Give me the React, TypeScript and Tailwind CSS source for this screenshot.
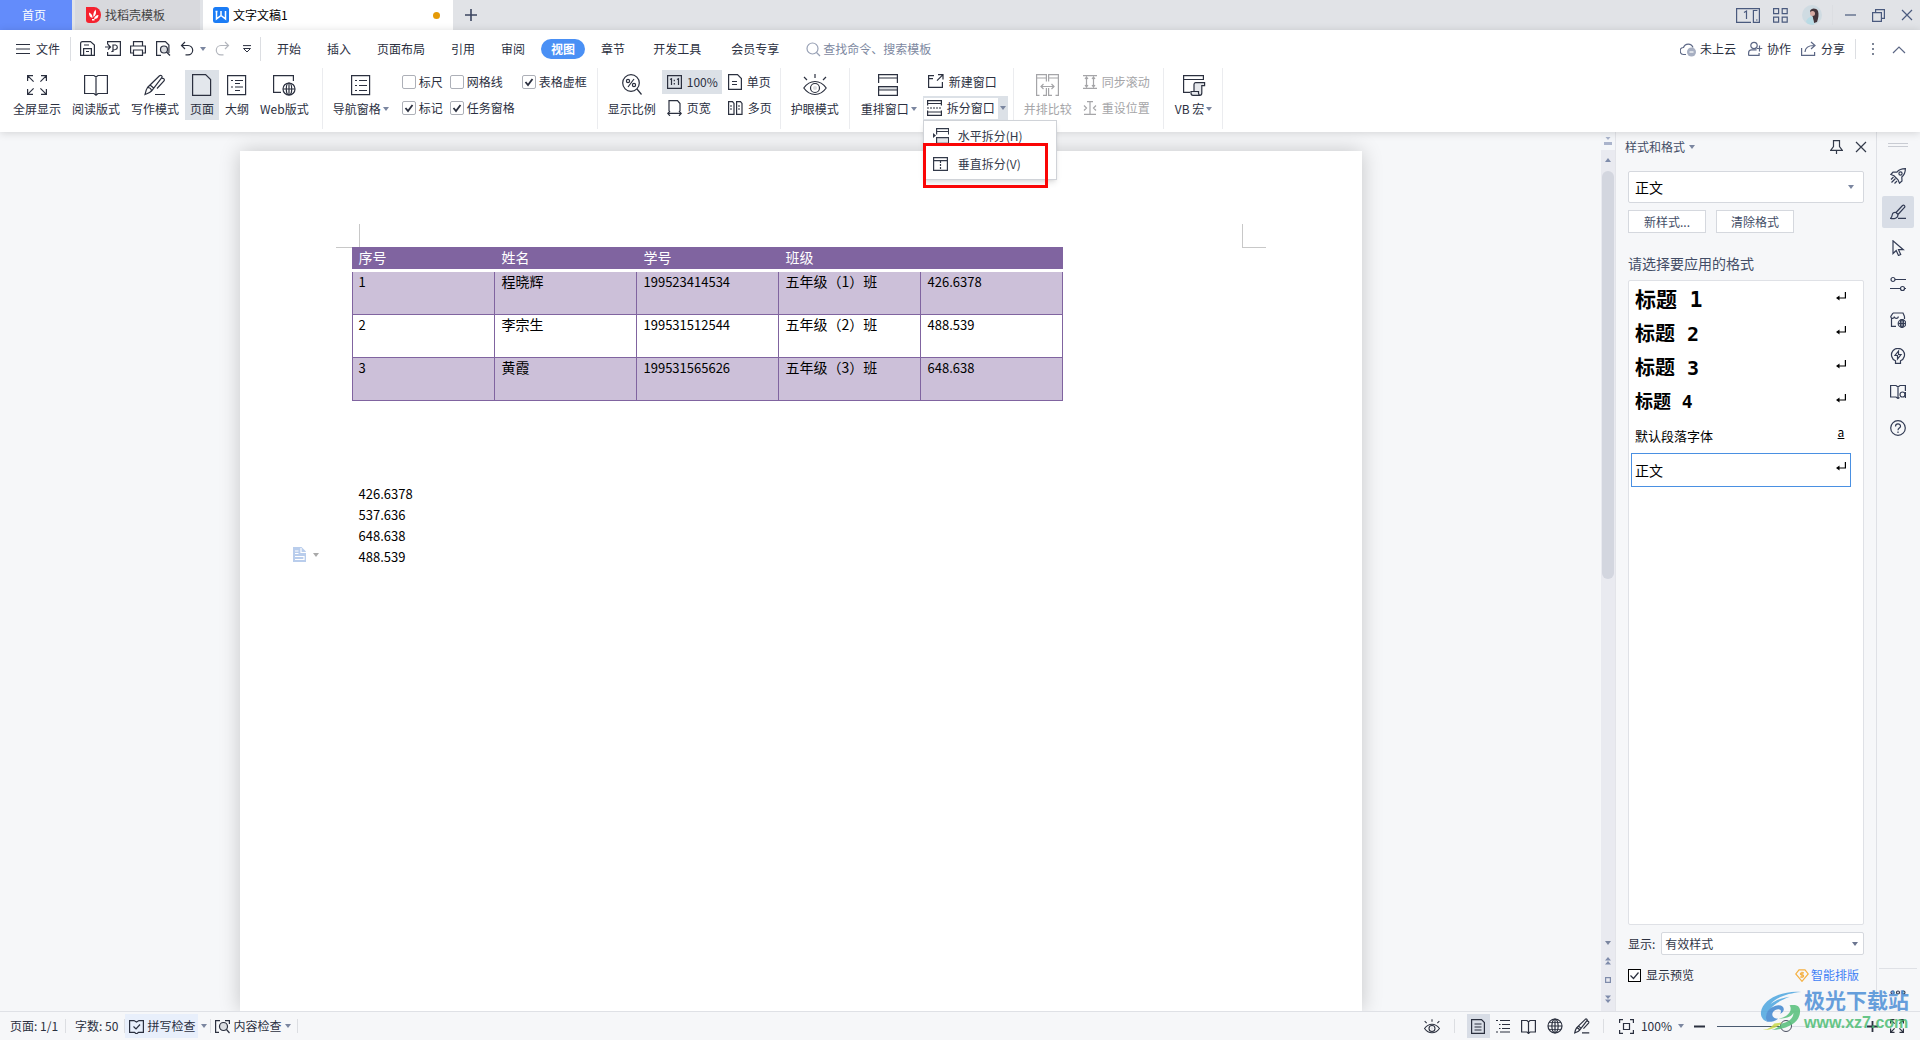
import type { ReactNode } from 'react';
import clsx from 'clsx';

type IconProps = {
  w?: number;
  h?: number;
  className?: string;
  children: ReactNode;
};

const Icon = ({ w = 16, h = 16, className, children }: IconProps) => (
  <svg
    width={w}
    height={h}
    viewBox={`0 0 ${w} ${h}`}
    fill="none"
    stroke="currentColor"
    strokeWidth="1.2"
    className={clsx('shrink-0', className)}
    aria-hidden="true"
  >
    {children}
  </svg>
);

const Caret = ({ className = 'text-[#7b86a0]' }: { className?: string }) => (
  <svg width="6" height="4" viewBox="0 0 6 4" className={clsx('shrink-0', className)} aria-hidden="true">
    <path d="M0 0h6L3 4z" fill="currentColor" />
  </svg>
);

const Divider = ({ className }: { className?: string }) => (
  <span className={clsx('w-px shrink-0 bg-[#dcdee2]', className)} />
);

/* ---------- icons used in more than one place ---------- */

const BookIcon = ({ className }: { className?: string }) => (
  <Icon w={24} h={22} className={className}>
    <path d="M.6 1.500h9.400l2 1.500 2-1.500h9.400v18H14l-2 1.700-2-1.700H.6zM12 3v18" />
  </Icon>
);

const EyeIcon = ({ w = 24, h = 22 }: { w?: number; h?: number }) => (
  <svg width={w} height={h} viewBox="0 0 24 22" fill="none" stroke="currentColor" strokeWidth={w < 20 ? 1.6 : 1.2} className="shrink-0" aria-hidden="true">
    <path d="M.8 14C4 9.500 8 7.500 12 7.500s8 2 11.200 6.500C20 18.500 16 20.500 12 20.500S4 18.500 .8 14z" />
    <circle cx="12" cy="14" r="4.500" />
    <circle cx="12" cy="14" r="2" fill="#dcdee2" stroke="none" />
    <path d="M12 0v4M1 3l3 3M23 3l-3 3" />
  </svg>
);

const PenIcon = ({ w = 22, h = 22 }: { w?: number; h?: number }) => (
  <svg width={w} height={h} viewBox="0 0 22 22" fill="none" stroke="currentColor" strokeWidth={w < 20 ? 1.6 : 1.2} className="shrink-0" aria-hidden="true">
    <path d="M1 20.500c.5-2.500 1-5 2.500-7L15.500 1.800c1.500-1.300 3.300.2 2.300 1.900L7.500 17c-1.500 1.800-4 2.500-6.500 3.500zM3.500 13.500c2 0 3.800 1.500 4 3.500M6 11l4 3.300M18 4.500c2-.5 3 1 2 2.500l-7 7.500M11 20.500h10" />
  </svg>
);

const GlobePath = ({ cx, cy, r }: { cx: number; cy: number; r: number }) => (
  <>
    <circle cx={cx} cy={cy} r={r} />
    <ellipse cx={cx} cy={cy} rx={r * 0.45} ry={r} />
    <path d={`M${cx - r} ${cy}h${r * 2}M${cx} ${cy - r}v${r * 2}`} />
  </>
);

/* ---------- title bar ---------- */

const TitleBar = () => (
  <header className="flex h-[30px] shrink-0 items-stretch bg-[#e1e3e7] text-xs text-[#3b4560]">
    <button className="w-[72px] bg-[#638cfb] pr-1 text-white">首页</button>
    <button className="ml-[3px] flex w-[125px] items-center gap-1 bg-[#d8d9dd] pl-[11px] text-[#444]">
      <Icon w={15} h={16}>
        <path d="M0 0h8a7 8 0 0 1 0 16H3a3 3 0 0 1-3-3z" fill="#f5222f" stroke="none" />
        <path d="M7.500 10c-.5-2.500 0-5 2-7.500 1.200 3 .5 5.500-2 7.500zM6.500 11C4 10.500 2.800 8.500 3 5.500 5.500 6.500 6.800 8.500 6.500 11zM8 12c.5-2.500 2-3.800 4.500-4-.3 3-1.800 4-4.500 4zM6 12h2.500v1.500H6z" fill="#fff" stroke="none" />
      </Icon>
      找稻壳模板
    </button>
    <button className="ml-[3px] flex w-[250px] items-center gap-1 bg-white pl-2.5 text-black">
      <Icon>
        <rect width="16" height="16" rx="2.500" fill="#1b7cf5" stroke="none" />
        <path d="M3.500 4v8L8 8.500l4.500 3.500V4M2.500 4.500h2M8 4v4.500" stroke="#fff" strokeWidth="1.500" />
      </Icon>
      文字文稿1
      <span className="mr-[13px] ml-auto size-[7px] rounded-full bg-[#e59a07]" />
    </button>
    <button className="px-3" aria-label="新建标签">
      <Icon w={12} h={12}>
        <path d="M6 0v12M0 6h12" strokeWidth="1.600" />
      </Icon>
    </button>
    <div className="ml-auto flex items-center pr-[7px] text-[#4a5a7e]">
      <button aria-label="文档列表">
        <Icon w={24} h={15}>
          <path d="M15 14.400H.6V.6h22.800v13.800h-6V2.500h4" />
          <path d="M8 4.500l2.500-1.500v8" />
          <path d="M20 12h1.500" />
        </Icon>
      </button>
      <button className="ml-[13px]" aria-label="应用">
        <Icon w={15} h={15}>
          <path d="M.6.6h5v5h-5zM9.200.6h5v5h-5zM.6 9.200h5v5h-5zM9.200 9.200h5v5h-5z" />
        </Icon>
      </button>
      <button className="ml-3.5" aria-label="账号">
        <Icon w={20} h={20}>
          <circle cx="10" cy="10" r="10" fill="#cfdbe2" stroke="none" />
          <path d="M8 6c1-3 6-3.500 8 0 1 3 .5 7-1 11l-3 1-1-5z" fill="#43343a" stroke="none" />
          <circle cx="10.500" cy="8.500" r="2.500" fill="#d9aca4" stroke="none" />
          <path d="M4 17c1-4 4-5.500 6.500-5.500l1.500 8c-3 .6-6 0-8-2.500z" fill="#b9dbe5" stroke="none" />
        </Icon>
      </button>
      <Divider className="ml-2.5 h-5 bg-[#c6c9d0]" />
      <button className="ml-3" aria-label="最小化">
        <Icon w={11} h={12}>
          <path d="M0 6h11" />
        </Icon>
      </button>
      <button className="ml-4" aria-label="还原">
        <Icon w={13} h={13}>
          <path d="M3.600 3.600V.6h8.800v8.800h-3M.6 3.600h8.800v8.800H.6z" />
        </Icon>
      </button>
      <button className="ml-4" aria-label="关闭">
        <Icon w={12} h={12}>
          <path d="M1 1l10 10M11 1L1 11" />
        </Icon>
      </button>
    </div>
  </header>
);

/* ---------- menu row ---------- */

const MenuRow = () => (
  <nav className="flex h-[38px] items-center pl-4">
    <button className="flex items-center gap-1.5">
      <Icon w={14} h={12}>
        <path d="M0 1.500h14M0 6h14M0 10.500h14" strokeWidth="1" />
      </Icon>
      文件
    </button>
    <Divider className="ml-2.5 h-6" />
    <div className="ml-[9px] flex items-center gap-[9px]">
      <button aria-label="保存">
        <Icon>
          <path d="M.6 2.500c0-1 .6-1.900 1.900-1.900h8L14.400 4v10.400H.6zM3.600 14V7.600h7.800V14M6 10.500h3M4 4h5" />
        </Icon>
      </button>
      <button aria-label="输出为PDF">
        <Icon>
          <path d="M2.600 3.500V.6h12.800v13.800H2.600V11M0 6h5M3 3.500L5.500 6 3 8.500M8 11V4h2.500a2.300 2.300 0 0 1 0 4.500c-1.500 0-3 1-4 2.500" />
        </Icon>
      </button>
      <button aria-label="打印">
        <Icon>
          <path d="M3.500 5V.6h9V5M3.500 12H.6V5h14.800v7h-2.900M3.500 9h9v5.400h-9z" />
        </Icon>
      </button>
      <button aria-label="打印预览">
        <Icon>
          <path d="M6 14.400H1.600V.6h8.800l3.500 3.500v8" />
          <circle cx="9" cy="8.500" r="3.500" fill="#dcdee2" />
          <path d="M11.500 11l3.500 3.500" />
        </Icon>
      </button>
      <button aria-label="撤销">
        <Icon>
          <path d="M5 1L1.500 4.500 5 8M1.500 4.500H8a4.700 4.700 0 0 1 0 9.400H5.500" />
        </Icon>
      </button>
    </div>
    <button className="ml-1" aria-label="撤销列表">
      <Caret />
    </button>
    <button className="ml-2 text-[#b3b6bd]" aria-label="恢复">
      <Icon>
        <path d="M11 1l3.500 3.500L11 8M14.500 4.500H7a4.700 4.700 0 0 0 0 9.400h2.500" />
      </Icon>
    </button>
    <button className="ml-3" aria-label="自定义快速访问">
      <Icon w={10} h={8}>
        <path d="M1 .6h8M1.500 3.500h7L5 7z" strokeWidth="1" />
      </Icon>
    </button>
    <Divider className="ml-2 h-6" />
    <div className="ml-[3px] flex items-center">
      {['开始', '插入', '页面布局', '引用', '审阅'].map((t) => (
        <button key={t} className="px-[13px]">
          {t}
        </button>
      ))}
      <button className="mx-[3px] h-5 rounded-full bg-[#4a90f5] px-2.5 font-bold text-white">视图</button>
      <button className="px-[13px]">章节</button>
      {['开发工具', '会员专享'].map((t) => (
        <button key={t} className="px-[15px]">
          {t}
        </button>
      ))}
    </div>
    <label className="ml-3 flex items-center gap-0.5 text-[#98a1b5]">
      <Icon w={15} h={15}>
        <circle cx="6.500" cy="6.500" r="5.500" />
        <path d="M10.500 10.500l3.500 3.500" />
      </Icon>
      <input className="w-40 outline-none placeholder:text-[#7d889f]" placeholder="查找命令、搜索模板" aria-label="查找命令" />
    </label>
    <div className="ml-auto flex items-center pr-3.5">
      <button className="flex items-center gap-1">
        <Icon>
          <path d="M6 13.500H4a3.500 3.500 0 0 1-.5-7A5 5 0 0 1 13 6.500" stroke="#5c6785" />
          <circle cx="11.500" cy="11" r="4.500" fill="#a7afc2" stroke="none" />
          <path d="M9.500 11h4" stroke="#fff" />
        </Icon>
        未上云
      </button>
      <button className="ml-3 flex items-center gap-1">
        <Icon w={15} className="text-[#5c6785]">
          <circle cx="6" cy="4.500" r="3.200" />
          <path d="M.6 14.400v-2.500c0-2 1.500-3 3-3h5M.6 14.400h10.500v-2.500M11.500 4.500v6M8.700 7.500h5.600" />
        </Icon>
        协作
      </button>
      <button className="ml-2.5 flex items-center gap-1">
        <Icon className="text-[#5c6785]">
          <path d="M.6 7v7.400h13V11M4 11c.3-4 2.500-6.500 9-6.500M10 1l4 3.500-4 3.500" />
        </Icon>
        分享
      </button>
      <Divider className="ml-2.5 h-5" />
      <button className="ml-4 text-[#7d8596]" aria-label="更多">
        <Icon w={2} h={12}>
          <path d="M1 0v2M1 5v2M1 10v2" strokeWidth="2" />
        </Icon>
      </button>
      <button className="ml-[18px] text-[#5c6785]" aria-label="收起功能区">
        <Icon w={14} h={9}>
          <path d="M1 8l6-6 6 6" />
        </Icon>
      </button>
    </div>
  </nav>
);

/* ---------- ribbon ---------- */

type BigButtonProps = { icon: ReactNode; label: string; caret?: boolean; active?: boolean; disabled?: boolean };

const BigButton = ({ icon, label, caret, active, disabled }: BigButtonProps) => (
  <button
    disabled={disabled}
    className={clsx(
      'flex h-[50px] shrink-0 flex-col items-center px-[5px] pt-[3px]',
      active && 'bg-[#dce1e7]',
      disabled && 'text-[#a5a5a8]',
    )}
  >
    <span className="flex h-[23px] items-center">{icon}</span>
    <span className="mt-1 flex items-center gap-0.5 leading-[18px]">
      {label}
      {caret && <Caret />}
    </span>
  </button>
);

type SmallButtonProps = { icon: ReactNode; label: string; active?: boolean; disabled?: boolean };

const SmallButton = ({ icon, label, active, disabled }: SmallButtonProps) => (
  <button
    disabled={disabled}
    className={clsx(
      'flex h-6 items-center gap-[5px] px-[5px] whitespace-nowrap',
      active && 'bg-[#dce1e7]',
      disabled && 'text-[#a5a5a8]',
    )}
  >
    {icon}
    {label}
  </button>
);

const CheckOption = ({ label, checked }: { label: string; checked?: boolean }) => (
  <label className="flex h-6 items-center gap-[3px] whitespace-nowrap">
    <span className="relative size-3.5">
      <input
        type="checkbox"
        defaultChecked={checked}
        className="peer block size-3.5 appearance-none rounded-xs border border-[#adb0b8] bg-white"
      />
      <Icon w={14} h={14} className="pointer-events-none invisible absolute top-0 left-0 peer-checked:visible">
        <path d="M3.500 7l2.500 3 4.500-6" strokeWidth="1.800" />
      </Icon>
    </span>
    {label}
  </label>
);

const Group = ({ children, className }: { children: ReactNode; className?: string }) => (
  <div className={clsx('flex h-[61px] shrink-0 border-r border-[#ebecef] pt-0.5', className)}>{children}</div>
);

const SplitMenu = () => (
  <div className="absolute top-6 left-0 z-20 w-[134px] border border-[#d0d3d8] bg-white py-px shadow-md">
    <button className="flex h-7 w-full items-center gap-[9px] pl-[9px] text-[#333a4a]">
      <Icon>
        <path d="M3.600 6.500V.6h12v5.900M3.600 3.500h12" />
        <path d="M3.600 15.400V9.600h12v5.800z" fill="#e3e5e9" />
        <path d="M0 5l3 2.500L0 10z" fill="currentColor" stroke="none" />
      </Icon>
      水平拆分(H)
    </button>
    <button className="flex h-7 w-full items-center gap-[9px] pl-[9px] text-[#333a4a]">
      <Icon>
        <path d="M.6 1.600h13.800v12.800H.6zM.6 4.600h13.800" />
        <path d="M7.500 5v9" strokeDasharray="2 1" />
      </Icon>
      垂直拆分(V)
    </button>
    <span className="pointer-events-none absolute top-[22px] -left-px h-[45px] w-[125px] border-3 border-[#fa0505]" />
  </div>
);

const Ribbon = () => (
  <div className="flex h-16">
    <Group className="gap-px pr-2 pl-2">
      <BigButton
        label="全屏显示"
        icon={
          <Icon w={20} h={20}>
            <path d="M.6 6V.6H6M.6.6l6 6M14 .6h5.400V6M19.400.6l-6 6M.6 14v5.400H6M.6 19.400l6-6M14 19.400h5.400V14M19.400 19.400l-6-6" />
          </Icon>
        }
      />
      <BigButton label="阅读版式" icon={<BookIcon />} />
      <BigButton label="写作模式" icon={<PenIcon />} />
      <BigButton
        label="页面"
        active
        icon={
          <Icon w={20} h={22}>
            <path d="M.6.6h13l5 5v15.800H.6z" fill="#e3e7ec" />
          </Icon>
        }
      />
      <BigButton
        label="大纲"
        icon={
          <Icon w={20} h={22}>
            <path d="M.6 1.600h18v19H.6zM8 6.500h8M8 9.500h5M8 13h8M8 16.500h5M4 6.500h2M4 13h2" />
          </Icon>
        }
      />
      <BigButton
        label="Web版式"
        icon={
          <Icon w={24} h={22}>
            <path d="M9 18.400H1.600V1.600h19.800V7" />
            <GlobePath cx={17} cy={15} r={6} />
          </Icon>
        }
      />
    </Group>

    <Group className="pr-2.5 pl-[5px]">
      <BigButton
        label="导航窗格"
        caret
        icon={
          <Icon w={20} h={22}>
            <path d="M.6 1.600h18v19H.6zM8 6.500h8M8 11.500h8M8 16.500h8M4 6.500h2M4 11.500h2M4 16.500h2" />
          </Icon>
        }
      />
      <div className="ml-2 grid grid-cols-[48px_72px_auto] content-start gap-y-0.5">
        <CheckOption label="标尺" />
        <CheckOption label="网格线" />
        <CheckOption label="表格虚框" checked />
        <CheckOption label="标记" checked />
        <CheckOption label="任务窗格" checked />
      </div>
    </Group>

    <Group className="pr-[3px] pl-[5px]">
      <BigButton
        label="显示比例"
        icon={
          <Icon w={20} h={22}>
            <circle cx="9" cy="9" r="8.300" />
            <path d="M15 15l4.500 5.500M12 5l-6 8" />
            <circle cx="6" cy="7" r="1.600" />
            <circle cx="12" cy="11" r="1.600" />
          </Icon>
        }
      />
      <div className="ml-px grid grid-cols-[60px_auto] content-start gap-x-px gap-y-0.5">
        <SmallButton
          label="100%"
          active
          icon={
            <Icon w={15} h={14}>
              <path d="M.6.6h13.800v12.800H.6zM3 4.500l1.500-.8V10M10 4.500l1.500-.8V10M7.300 4.800v1.400M7.300 8v1.400" />
            </Icon>
          }
        />
        <SmallButton
          label="单页"
          icon={
            <Icon w={14} h={16}>
              <path d="M.6.6h8.900l3.900 3.900v10.900H.6zM4 7.500h5M4 10.500h5" />
            </Icon>
          }
        />
        <SmallButton
          label="页宽"
          icon={
            <Icon w={15} h={16}>
              <path d="M2 11V.6h8.500L13 3.500V11M.5 13.400h14M3 11L.8 13.400 3 15.800M12 11l2.200 2.400L12 15.800" />
            </Icon>
          }
        />
        <SmallButton
          label="多页"
          icon={
            <Icon w={15} h={14}>
              <path d="M.6.6h3.900L6 2.500v10.900H.6zM8.600.6h3.900L14 2.500v10.900H8.600zM2 5h2M2 8h2M10 5h2M10 8h2" />
            </Icon>
          }
        />
      </div>
    </Group>

    <Group className="px-[5px]">
      <BigButton label="护眼模式" icon={<EyeIcon />} />
    </Group>

    <Group className="pr-[5px] pl-1.5">
      <BigButton
        label="重排窗口"
        caret
        icon={
          <Icon w={21} h={22}>
            <path d="M.6 9V.6h18.800V9M.6 4h18.800" />
            <path d="M1 13h18v3H1z" fill="#dcdee2" stroke="none" />
            <path d="M.6 12.600h18.800v8.800H.6zM.6 16h18.800" />
          </Icon>
        }
      />
      <div className="ml-px flex flex-col gap-0.5">
        <SmallButton
          label="新建窗口"
          icon={
            <Icon>
              <path d="M6 1.600H.6v11.800h13.800V8M10 .6h5v5M15 .6l-6 6M.6 4.600H5" />
            </Icon>
          }
        />
        <div className="relative flex h-6 w-[85px] items-center bg-[#dce1e7] p-px">
          <button className="flex h-[21px] items-center gap-1 bg-white px-[3px]">
            <Icon>
              <path d="M.6 5.500V.6h13.800v4.900M.6 3.500h13.800M.6 10.500v4.900h13.800v-4.900M.6 12h13.800" />
              <path d="M0 8h15" strokeDasharray="2 1" />
            </Icon>
            拆分窗口
          </button>
          <button className="ml-0.5" aria-label="拆分窗口选项">
            <Caret />
          </button>
          <SplitMenu />
        </div>
      </div>
    </Group>

    <Group className="pr-2 pl-[5px]">
      <BigButton
        label="并排比较"
        disabled
        icon={
          <Icon w={23} h={22}>
            <path d="M3.500 21.400H.6V.6h9.800v7M10.400 14v7.400H7M19.500 21.400h2.900V.6h-9.800v7M12.600 14v7.400H16M.6 4h9.800M12.600 4h9.800M5 12.500h13M7.500 10L5 12.500 7.500 15M15.500 10l2.500 2.500-2.500 2.500" />
          </Icon>
        }
      />
      <div className="ml-px flex flex-col gap-0.5">
        <SmallButton
          label="同步滚动"
          disabled
          icon={
            <Icon w={14} h={14}>
              <path d="M0 .6h14M0 13.400h14M3.500 2v10M10.500 2v10M2 4l1.500-2L5 4M2 10l1.500 2L5 10M9 4l1.500-2L12 4M9 10l1.500 2 1.500-2" />
            </Icon>
          }
        />
        <SmallButton
          label="重设位置"
          disabled
          icon={
            <Icon w={14} h={14}>
              <path d="M4 .6h6M1 13.400h12M7 1v12M1 4.500l2.500 2.500L1 9.500M13 4.500L10.500 7 13 9.500" />
            </Icon>
          }
        />
      </div>
    </Group>

    <Group className="pr-[5px] pl-1.5">
      <BigButton
        label="VB 宏"
        caret
        icon={
          <Icon w={24} h={22}>
            <path d="M8 18.400H1.600V1.600h19.800V6M1.600 5.500h19.800" />
            <path d="M12 17V10.500c0-1 .6-1.900 1.600-1.900h9v3h-2.800V19c0 1.500-1 2.400-2 2.400H11c-1.500 0-2-1.400-2-2.400v-1.500h7.500V19c0 1.200.5 2 1.500 2.400" fill="#e6e8ec" />
          </Icon>
        }
      />
    </Group>
  </div>
);

/* ---------- document ---------- */

const ROWS = [
  ['1', '程晓辉', '199523414534', '五年级（1）班', '426.6378'],
  ['2', '李宗生', '199531512544', '五年级（2）班', '488.539'],
  ['3', '黄霞', '199531565626', '五年级（3）班', '648.638'],
];

const LINES = ['426.6378', '537.636', '648.638', '488.539'];

const isNumeric = (s: string) => /^[\d.]+$/.test(s);

const Document = () => (
  <main className="flex min-w-0 flex-1 justify-center overflow-hidden bg-[#f6f7f9] pt-[19px]">
    <article className="w-[1122px] shrink-0 bg-white px-24 pt-[73px] text-sm leading-[21px] text-black shadow-[0_0_20px_rgba(0,0,0,0.2)]">
      <div className="flex justify-between">
        <span className="size-6 border-r border-b border-[#c8c8c8]" />
        <span className="size-6 border-b border-l border-[#c8c8c8]" />
      </div>
      <table className="relative -mt-px ml-4 w-[711px] table-fixed border-separate border-spacing-0 text-left leading-[19px]">
        <colgroup>
          <col className="w-[143px]" />
          <col span={4} className="w-[142px]" />
        </colgroup>
        <thead>
          <tr>
            {['序号', '姓名', '学号', '班级', ''].map((h, i) => (
              <th
                key={i}
                className="h-[25px] border-b-3 border-b-white bg-[#8064a0] pt-px pl-[7px] align-top font-normal text-white"
              >
                {h}
              </th>
            ))}
          </tr>
        </thead>
        <tbody>
          {ROWS.map((row) => (
            <tr key={row[0]} className="odd:bg-[#ccc0d9]">
              {row.map((cell) => (
                <td
                  key={cell}
                  className={clsx(
                    'h-[43px] border-r border-b border-[#8064a0] pl-[7px] align-top first:border-l first:pl-1.5',
                    isNumeric(cell) && 'text-[13px]',
                  )}
                >
                  {cell}
                </td>
              ))}
            </tr>
          ))}
        </tbody>
      </table>
      <div className="relative mt-[82px] ml-[23px] text-[13px]">
        {LINES.map((l) => (
          <p key={l}>{l}</p>
        ))}
        <button className="absolute bottom-1 -left-[66px] flex items-center gap-1.5" aria-label="粘贴选项">
          <Icon w={14} h={16}>
            <path d="M0 0h8.500L13 4.500V15H0z" fill="#b9cdec" stroke="none" />
            <path d="M2 4h3.500M2 6.500h3.500M2 9.500h9v3H2M8 1v4.500h5" stroke="#fff" />
          </Icon>
          <Caret className="text-[#a9a9a9]" />
        </button>
      </div>
    </article>
  </main>
);

const ScrollBar = () => (
  <div className="flex w-[15px] shrink-0 flex-col items-center border-r border-[#e3e4e9] bg-[#e9eaf0] text-[#7f8cab]">
    <button className="flex h-[18px] w-full items-center justify-center bg-[#f4f6f9] text-[#aab4cc]" aria-label="标尺开关">
      <Icon w={8} h={8}>
        <path d="M1.500 0h5L4 3zM0 5h8v3H0z" fill="currentColor" stroke="none" />
      </Icon>
    </button>
    <button className="flex h-5 items-center" aria-label="向上滚动">
      <Caret className="rotate-180" />
    </button>
    <div className="mt-px w-full flex-1">
      <div className="mx-auto h-[53%] w-3 rounded-full bg-[#d3d6df]" />
    </div>
    <div className="flex flex-col items-center gap-3 pb-2">
      <button aria-label="向下滚动">
        <Caret />
      </button>
      <button aria-label="上一页">
        <Icon w={6} h={8}>
          <path d="M3 0l3 3.500H0zM3 4l3 3.500H0z" fill="currentColor" stroke="none" />
        </Icon>
      </button>
      <button aria-label="选择浏览对象">
        <Icon w={6} h={6}>
          <path d="M.6.6h4.800v4.800H.6z" />
        </Icon>
      </button>
      <button aria-label="下一页">
        <Icon w={6} h={8}>
          <path d="M0 .5h6L3 4zM0 4.500h6L3 8z" fill="currentColor" stroke="none" />
        </Icon>
      </button>
    </div>
  </div>
);

/* ---------- style panel ---------- */

const HEADING = "font-['DejaVu_Sans_Mono','Noto_Sans_CJK_SC',monospace] font-bold";

const STYLES = [
  { name: '标题 1', className: clsx(HEADING, 'text-[21px]') },
  { name: '标题 2', className: clsx(HEADING, 'text-xl') },
  { name: '标题 3', className: clsx(HEADING, 'text-xl') },
  { name: '标题 4', className: clsx(HEADING, 'text-lg') },
  { name: '默认段落字体', className: 'text-[13px]', char: true },
  { name: '正文', className: 'text-sm', selected: true },
];

const ReturnMark = () => (
  <Icon w={10} h={10} className="mt-1">
    <path d="M9.400 0v6H2" />
    <path d="M0 6l3.500-2.500v5z" fill="currentColor" stroke="none" />
  </Icon>
);

const StylePanel = () => (
  <aside className="flex w-[261px] shrink-0 flex-col border-r border-[#dfe1e6] bg-[#f6f7f9] pr-3 pl-3 text-xs text-[#434d66]">
    <div className="-ml-[3px] flex h-[30px] items-center">
      <button className="flex items-center gap-1">
        样式和格式 <Caret />
      </button>
      <button className="ml-auto text-[#333a4a]" aria-label="固定">
        <Icon w={13} h={14}>
          <path d="M3.500.6h6v6l2.900 3.800H.6l2.900-3.800zM6.500 10.400V14" />
        </Icon>
      </button>
      <button className="mr-[-3px] ml-3 text-[#333a4a]" aria-label="关闭面板">
        <Icon w={12} h={12}>
          <path d="M1 1l10 10M11 1L1 11" />
        </Icon>
      </button>
    </div>
    <div className="relative mt-[9px]">
      <select
        aria-label="当前样式"
        className="h-8 w-full appearance-none rounded-xs border border-[#d5d8de] bg-white pl-1.5 text-sm text-black"
      >
        <option>正文</option>
      </select>
      <Caret className="pointer-events-none absolute top-3.5 right-2.5 text-[#7b86a0]" />
    </div>
    <div className="mt-[7px] flex gap-2.5">
      <button className="h-[23px] w-[78px] border border-[#d5d8de] bg-white">新样式...</button>
      <button className="h-[23px] w-[78px] border border-[#d5d8de] bg-white">清除格式</button>
    </div>
    <h2 className="mt-5 text-sm leading-5">请选择要应用的格式</h2>
    <ul className="mt-[7px] flex-1 rounded-xs border border-[#dfe1e6] bg-white py-0.5 pr-3 pl-0.5 text-black">
      {STYLES.map((s) => (
        <li key={s.name}>
          <button
            className={clsx(
              'flex h-[34px] w-full items-center justify-between border px-[3px] text-left',
              s.selected ? 'border-[#4a90e2]' : 'border-transparent',
            )}
          >
            <span className={s.className}>{s.name}</span>
            <span className="flex h-6 w-3 items-start justify-center">
              {s.char ? <span className="text-xs leading-4 underline">a</span> : <ReturnMark />}
            </span>
          </button>
        </li>
      ))}
    </ul>
    <label className="mt-[7px] flex items-center gap-1.5 text-[#2b303f]">
      显示:
      <span className="relative flex-1">
        <select className="block h-[23px] w-full appearance-none rounded-xs border border-[#d5d8de] bg-white pl-[3px] text-[#333a4a]">
          <option>有效样式</option>
        </select>
        <Caret className="pointer-events-none absolute top-2.5 right-1.5 text-[#6b7590]" />
      </span>
    </label>
    <div className="mt-2.5 mb-[26px] flex h-5 items-center justify-between pr-[5px]">
      <label className="flex items-center gap-[5px] text-[#2b303f]">
        <span className="relative size-[13px]">
          <input type="checkbox" defaultChecked className="peer block size-[13px] appearance-none border border-black bg-white" />
          <Icon w={13} h={13} className="pointer-events-none invisible absolute top-0 left-0 peer-checked:visible">
            <path d="M2.500 6.500l3 3 5-6" />
          </Icon>
        </span>
        显示预览
      </label>
      <a href="#layout" className="flex items-center gap-0.5 text-[#3f7ff5]">
        <Icon w={14} h={13} className="text-[#f5b041]">
          <path d="M4 .8h6L13.200 5 7 12.300.8 5z" />
          <path d="M9 3.800H6.500c-1.500 0-1.500 2 0 2h1c1.500 0 1.500 2.200 0 2.200H5M7 2.800v6.200" />
        </Icon>
        智能排版
      </a>
    </div>
  </aside>
);

const SIDE_TOOLS: { label: string; icon: ReactNode }[] = [
  {
    label: '推荐',
    icon: (
      <>
        <path d="M15.400.6c-4 0-6.500 1-8.500 3.500L3 4 .8 6.500 4 7.800l4 4 1.500 3.400L12 13l-.2-4c2.500-2 3.600-4.500 3.600-8.400z" />
        <circle cx="10.500" cy="5.500" r="1.600" />
        <path d="M1 11.500l2.500-2.500M1.500 14.500l4-4M4.500 15.500l2.500-2.500" />
      </>
    ),
  },
  {
    label: '样式和格式',
    icon: <path d="M6 8.500L12.500 1.500c1.500-1 3 .5 2 2L8 10.500M6 8.500c-2-.5-3.500.5-3.800 2.500-.2 1.500-.7 2.500-1.700 3.500 3.500.5 7.500 0 7.500-4zM6 8.500l2 2M8 14.400h8" />,
  },
  {
    label: '选择',
    icon: <path d="M3 .8v12.700l3.200-3 2.300 5 2.200-1-2.200-4.800h4.800z" />,
  },
  {
    label: '属性',
    icon: (
      <>
        <circle cx="3" cy="3.500" r="2" />
        <circle cx="12.500" cy="12.500" r="2" />
        <path d="M5 3.500h11M0 12.500h10.500M14.500 12.500H16" />
      </>
    ),
  },
  {
    label: '素材',
    icon: (
      <>
        <path d="M1.500 6v8.400H6M3 1h10l1.500 3.500M3 1L.8 4.500c0 2.500 3.500 2.500 3.500 0 0 2.500 4 2.500 4 0M14.500 4.500V7" />
        <GlobePath cx={12} cy={11.500} r={3.800} />
      </>
    ),
  },
  {
    label: '灵感',
    icon: <path d="M5.500 12.800A6.500 6.500 0 1 1 10.500 12.800V15.400h-5zM8.500 3L5 7.500h2.500v3.500L11 6.500H8.500z" />,
  },
  {
    label: '查找',
    icon: (
      <>
        <path d="M8 3v11.500M8 14.500L6 13H.6V1.500H6L8 3l2-1.500h5.400V7M8 14.500l1.500-1" />
        <circle cx="12.500" cy="10.500" r="2.500" />
        <path d="M15.400 8v6" />
      </>
    ),
  },
  {
    label: '帮助',
    icon: (
      <>
        <circle cx="8" cy="8" r="7.300" />
        <path d="M5.500 6.500c0-3.500 5-3.300 5-.3 0 1.800-2.500 2-2.500 4M8 11.500V13" />
      </>
    ),
  },
];

const SideTools = () => (
  <div className="flex w-[43px] shrink-0 flex-col items-center bg-[#f6f7f9] pr-0.5 text-[#333c55]">
    <span className="mt-[11px] h-1 w-5 border-y border-[#c9ccd3]" />
    <div className="mt-[13px] flex flex-col gap-1">
      {SIDE_TOOLS.map((t, i) => (
        <button
          key={t.label}
          aria-label={t.label}
          className={clsx('flex size-8 items-center justify-center', i === 1 && 'rounded-xs bg-[#d8dde6]')}
        >
          <Icon>{t.icon}</Icon>
        </button>
      ))}
    </div>
    <span className="mt-auto h-px w-[38px] bg-[#dfe1e6]" />
    <button className="mt-[21px] mb-4" aria-label="更多工具">
      <Icon w={16} h={5}>
        <circle cx="2.500" cy="2.500" r="1.500" />
        <circle cx="8" cy="2.500" r="1.500" />
        <circle cx="13.500" cy="2.500" r="1.500" />
      </Icon>
    </button>
  </div>
);

/* ---------- status bar ---------- */

const StatusBar = () => (
  <footer className="flex h-[29px] shrink-0 items-center border-t border-[#dfe1e6] bg-[#f6f7f9] pr-4 pl-2.5 text-xs">
    <span>页面: 1/1</span>
    <Divider className="ml-[7px] h-3.5" />
    <span className="ml-[9px]">字数: 50</span>
    <Divider className="ml-1.5 h-3.5" />
    <button className="flex h-6 items-center gap-[3px] bg-[#e8effb] pr-[3px] pl-1">
      <Icon w={15} h={15}>
        <path d="M5 1.600H.6v11.800h4.900L7.500 15l2-1.600h4.900V1.600H10L7.500 3zM4.500 7.500l2.500 2.500 4-4.500" />
      </Icon>
      拼写检查
    </button>
    <button className="ml-[3px]" aria-label="拼写检查选项">
      <Caret />
    </button>
    <Divider className="ml-[3px] h-3.5" />
    <button className="ml-1 flex h-6 items-center gap-[3px]">
      <Icon w={15} h={15}>
        <path d="M4 13.400H.6V1.600H5M10 1.600h4.400V5" />
        <circle cx="8.500" cy="7.500" r="4" fill="#dcdee2" />
        <path d="M11.500 10.500l3 3.500" />
      </Icon>
      内容检查
    </button>
    <button className="ml-1" aria-label="内容检查选项">
      <Caret />
    </button>
    <Divider className="ml-1.5 h-3.5" />

    <div className="ml-auto flex items-center">
      <button aria-label="护眼模式">
        <EyeIcon w={16} h={15} />
      </button>
      <Divider className="ml-3.5 h-3.5" />
      <button className="ml-3 flex h-6 w-[23px] items-center justify-center bg-[#d8dde6]" aria-label="页面视图">
        <Icon w={14} h={15}>
          <path d="M.6.6h9.900l2.900 2.900v10.900H.6zM3.500 5h7M3.500 8h7M3.500 11h7" />
        </Icon>
      </button>
      <div className="ml-1.5 flex items-center gap-[11px]">
        <button aria-label="大纲视图">
          <Icon w={14} h={14}>
            <path d="M0 1.500h2M4 1.500h10M3 5.500h1.500M6 5.500h8M3 9.500h1.500M6 9.500h8M0 13h2M4 13h10" />
          </Icon>
        </button>
        <button aria-label="阅读视图">
          <Icon w={15} h={15}>
            <path d="M.6 1.500H6L7.500 3 9 1.500h5.400v11.500H9l-1.500 1.500L6 13H.6zM7.500 3v11.500" />
          </Icon>
        </button>
        <button aria-label="Web视图">
          <Icon>
            <GlobePath cx={8} cy={8} r={7} />
            <path d="M2 4.500h12M2 11.500h12" strokeWidth=".8" />
          </Icon>
        </button>
        <button aria-label="写作视图">
          <PenIcon w={16} h={16} />
        </button>
      </div>
      <Divider className="ml-[13px] h-3.5" />
      <button className="ml-[15px]" aria-label="适应页面">
        <Icon w={15} h={15}>
          <path d="M.6 4V.6H4M11 .6h3.400V4M.6 11v3.400H4M11 14.400h3.400V11M4.500 4.500h6v6h-6z" />
        </Icon>
      </button>
      <button className="ml-[7px] flex items-center gap-1.5">
        100% <Caret />
      </button>
      <button className="ml-2.5" aria-label="缩小">
        <Icon w={11} h={11}>
          <path d="M0 5.500h11" strokeWidth="2" />
        </Icon>
      </button>
      <input
        type="range"
        aria-label="缩放"
        defaultValue={46}
        className="ml-3 h-3 w-[150px] appearance-none bg-[linear-gradient(to_right,#4a5a70_46%,#d9dce4_46%)] bg-[length:100%_1px] bg-center bg-no-repeat [&::-webkit-slider-thumb]:size-3 [&::-webkit-slider-thumb]:appearance-none [&::-webkit-slider-thumb]:rounded-full [&::-webkit-slider-thumb]:border [&::-webkit-slider-thumb]:border-[#4a5060] [&::-webkit-slider-thumb]:bg-[#f6f7f9]"
      />
      <button aria-label="放大">
        <Icon w={11} h={11}>
          <path d="M0 5.500h11M5.500 0v11" strokeWidth="1.800" />
        </Icon>
      </button>
      <button className="ml-3" aria-label="全屏">
        <Icon w={14} h={14}>
          <path d="M.6 4.500V.6h3.900M.6.6l4 4M9.500.6h3.900v3.900M13.400.6l-4 4M.6 9.500v3.900h3.900M.6 13.400l4-4M9.500 13.400h3.900V9.500M13.400 13.400l-4-4" />
        </Icon>
      </button>
    </div>
  </footer>
);

const Watermark = () => (
  <div className="pointer-events-none absolute right-[11px] bottom-[7px] z-30 flex items-center gap-0.5 font-['Liberation_Sans','Noto_Sans_CJK_SC',sans-serif] opacity-85">
    <svg width="42" height="42" viewBox="0 0 44 42" aria-hidden="true">
      <path d="M43 1C25-1 3 8 1 22c-.5 6 3 9 6 10-3-10 8-20 24-26-8 1-16 4-20 8C16 7 30 2 43 1z" fill="#4ea6e0" />
      <path d="M7 32c-3-8 3-16 12-17 7-.5 8 7 2 9 3-4-1-6-5-4-5 3-4 9 3 9-4 3-9 4-12 3z" fill="#3f87d0" />
      <path d="M19 29c9-1 16-8 12-14 6-1 11 0 11 6 0 11-11 19-30 20 6-2 9-4 11-7 6-1 12-5 12-11-2 4-8 6-16 6z" fill="#55bf7a" />
      <path d="M3 41c6-1 10-4 12-7l8-1C19 38 12 41 3 41z" fill="#c9d94a" />
    </svg>
    <div>
      <p className="text-[21px] leading-6 font-bold text-[#4d8fd6]">极光下载站</p>
      <p className="text-base leading-5 font-bold text-[#4dbd74]">www.xz7.com</p>
    </div>
  </div>
);

export default function App() {
  return (
    <div className="relative flex h-screen flex-col overflow-hidden bg-white font-['Noto_Sans_CJK_SC','Liberation_Sans',sans-serif] text-[#2b303f]">
      <TitleBar />
      <div className="relative z-10 shrink-0 bg-white text-xs shadow-[0_1px_8px_rgba(0,0,0,0.15)]">
        <MenuRow />
        <Ribbon />
      </div>
      <div className="flex min-h-0 flex-1">
        <Document />
        <ScrollBar />
        <StylePanel />
        <SideTools />
      </div>
      <StatusBar />
      <Watermark />
    </div>
  );
}
